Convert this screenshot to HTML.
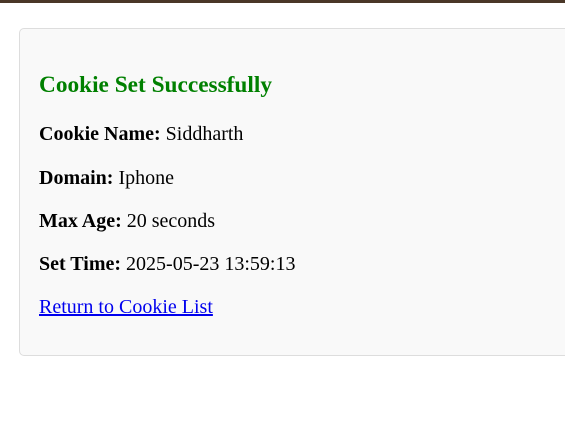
<!DOCTYPE html>
<html><head><style>
html,body{margin:0;padding:0;background:#fff;width:565px;height:448px;overflow:hidden;font-family:"Liberation Serif",serif;}
.bar{position:absolute;left:0;top:0;width:565px;height:3px;background:#4a3728;}
.card{position:absolute;left:19px;top:28px;width:580px;height:326px;background:#f9f9f9;border:1px solid #ddd;border-radius:5px;}
.t{position:absolute;left:39px;white-space:nowrap;line-height:1;}
h2{margin:0;color:#008000;font-size:23.3px;font-weight:bold;}
.p{font-size:20px;color:#000;}
a{color:#0000ee;text-decoration:underline;}
</style></head><body>
<div class="bar"></div>
<div class="card"></div>
<div class="t" style="top:74px"><h2>Cookie Set Successfully</h2></div>
<div class="t p" style="top:124px"><b>Cookie Name:</b> Siddharth</div>
<div class="t p" style="top:168px"><b>Domain:</b> Iphone</div>
<div class="t p" style="top:211px"><b>Max Age:</b> 20 seconds</div>
<div class="t p" style="top:254px"><b>Set Time:</b> 2025-05-23 13:59:13</div>
<div class="t p" style="top:297px"><a>Return to Cookie List</a></div>
</body></html>
